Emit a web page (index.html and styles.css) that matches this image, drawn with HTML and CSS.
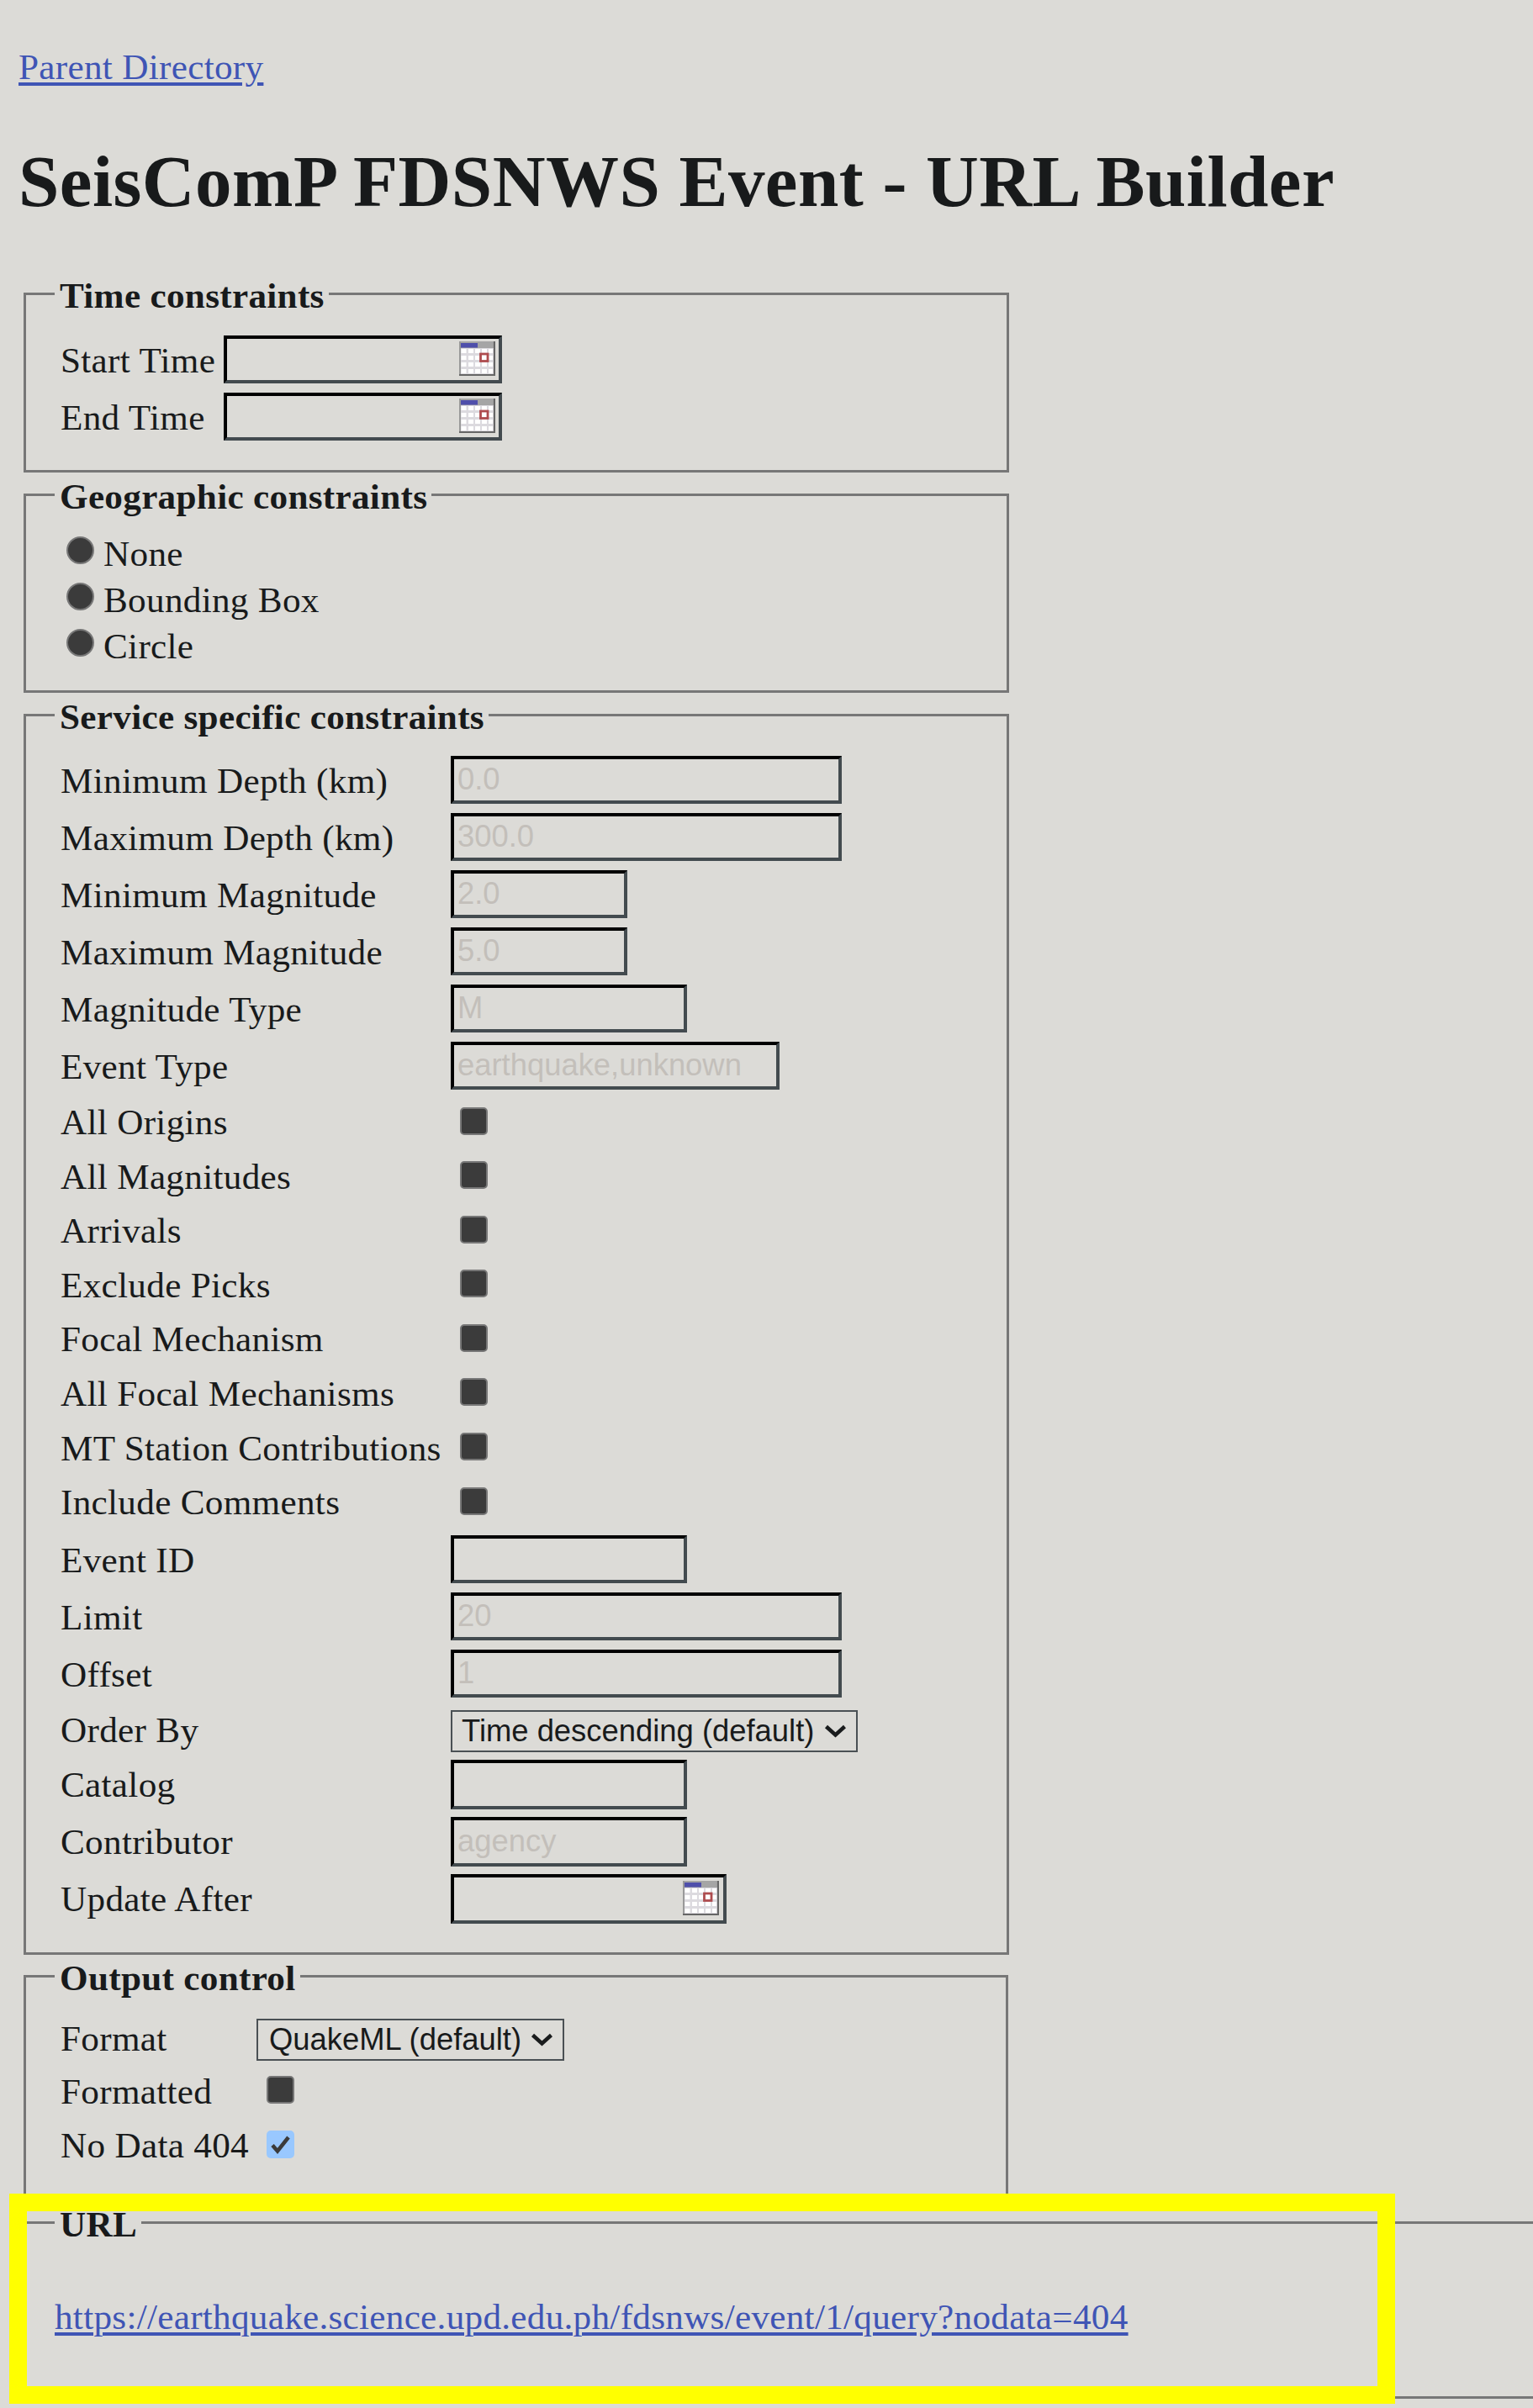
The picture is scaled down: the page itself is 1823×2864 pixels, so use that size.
FILE: index.html
```html
<!DOCTYPE html>
<html lang="en">
<head>
<meta charset="utf-8">
<title>SeisComP FDSNWS Event - URL Builder</title>
<link rel="stylesheet" href="styles.css">
</head>
<body>
<svg class="defs" width="0" height="0" aria-hidden="true">
  <symbol id="calendar" viewBox="0 0 43 41">
    <rect width="43" height="41" fill="#dcdadf"/>
    <rect width="43" height="8" fill="#a5a5a5"/>
    <rect x="2" y="2" width="20" height="5.5" fill="#4f4fab"/>
    <g fill="#fff">
      <path d="M2.5 9h6v5h-6zM11 9h6v5h-6zM19 9h6v5h-6zM27 9h6v5h-6zM35 9h5v5h-5z"/>
      <path d="M2.5 17h6v5h-6zM11 17h6v5h-6zM19 17h6v5h-6zM27 17h6v5h-6zM35 17h5v5h-5z"/>
      <path d="M2.5 25h6v5h-6zM11 25h6v5h-6zM19 25h6v5h-6zM27 25h6v5h-6zM35 25h5v5h-5z"/>
      <path d="M2.5 33h6v5h-6zM11 33h6v5h-6zM19 33h6v5h-6zM27 33h6v5h-6zM35 33h5v5h-5z"/>
    </g>
    <path d="M1 0v41" stroke="#999" stroke-width="2"/>
    <path d="M42 0v41M0 40h43" stroke="#666" stroke-width="2.2" fill="none"/>
    <rect x="25.5" y="15" width="8.5" height="8.5" fill="#fff" stroke="#ae4c4f" stroke-width="2.8"/>
  </symbol>
  <symbol id="chevron" viewBox="0 0 26 18">
    <path d="M2.5 3.5L13.5 13.5 24.5 3.5" fill="none" stroke="#1a1c1d" stroke-width="4.6"/>
  </symbol>
</svg>

<p class="parent"><a href="#">Parent Directory</a></p>
<h1>SeisComP FDSNWS Event - URL Builder</h1>

<fieldset class="time">
  <legend>Time constraints</legend>
  <div class="row"><label>Start Time</label><span class="date"><input class="w-date"><svg><use href="#calendar"/></svg></span></div>
  <div class="row"><label>End Time</label><span class="date"><input class="w-date"><svg><use href="#calendar"/></svg></span></div>
</fieldset>

<fieldset class="geo">
  <legend>Geographic constraints</legend>
  <div class="row"><input type="radio" name="geo"><label>None</label></div>
  <div class="row"><input type="radio" name="geo"><label>Bounding Box</label></div>
  <div class="row"><input type="radio" name="geo"><label>Circle</label></div>
</fieldset>

<fieldset class="service">
  <legend>Service specific constraints</legend>
  <div class="row"><label>Minimum Depth (km)</label><input class="w-l" placeholder="0.0"></div>
  <div class="row"><label>Maximum Depth (km)</label><input class="w-l" placeholder="300.0"></div>
  <div class="row"><label>Minimum Magnitude</label><input class="w-s" placeholder="2.0"></div>
  <div class="row"><label>Maximum Magnitude</label><input class="w-s" placeholder="5.0"></div>
  <div class="row"><label>Magnitude Type</label><input class="w-m" placeholder="M"></div>
  <div class="row"><label>Event Type</label><input class="w-e" placeholder="earthquake,unknown"></div>
  <div class="row check"><label>All Origins</label><input type="checkbox"></div>
  <div class="row check"><label>All Magnitudes</label><input type="checkbox"></div>
  <div class="row check"><label>Arrivals</label><input type="checkbox"></div>
  <div class="row check"><label>Exclude Picks</label><input type="checkbox"></div>
  <div class="row check"><label>Focal Mechanism</label><input type="checkbox"></div>
  <div class="row check"><label>All Focal Mechanisms</label><input type="checkbox"></div>
  <div class="row check"><label>MT Station Contributions</label><input type="checkbox"></div>
  <div class="row check last"><label>Include Comments</label><input type="checkbox"></div>
  <div class="row"><label>Event ID</label><input class="w-m"></div>
  <div class="row"><label>Limit</label><input class="w-l" placeholder="20"></div>
  <div class="row"><label>Offset</label><input class="w-l" placeholder="1"></div>
  <div class="row choice"><label>Order By</label><span class="select w-order"><span>Time descending (default)</span><svg><use href="#chevron"/></svg></span></div>
  <div class="row tall"><label>Catalog</label><input class="w-m"></div>
  <div class="row tall"><label>Contributor</label><input class="w-m" placeholder="agency"></div>
  <div class="row tall"><label>Update After</label><span class="date"><input class="w-update"><svg><use href="#calendar"/></svg></span></div>
</fieldset>

<fieldset class="output">
  <legend>Output control</legend>
  <div class="row choice"><label>Format</label><span class="select w-format"><span>QuakeML (default)</span><svg><use href="#chevron"/></svg></span></div>
  <div class="row check"><label>Formatted</label><input type="checkbox"></div>
  <div class="row check"><label>No Data 404</label><span class="checked"><svg viewBox="0 0 33 33"><path d="M7 17.5l6 7L26 8" fill="none" stroke="#3b3b3b" stroke-width="4.5"/></svg></span></div>
</fieldset>

<fieldset class="url">
  <legend>URL</legend>
  <a href="#">https://earthquake.science.upd.edu.ph/fdsnws/event/1/query?nodata=404</a>
</fieldset>
<div class="highlight"></div>
</body>
</html>
```

FILE: styles.css
```css
* { box-sizing: border-box; }
html { background: #dcdbd7; }
body {
  position: relative;
  width: 1823px;
  height: 2864px;
  margin: 0;
  padding: 55px 0 0 22px;
  overflow: hidden;
  background: #dcdbd7;
  color: #181a1b;
  font: 43.2px/50px "Liberation Serif", "Times New Roman", serif;
  letter-spacing: 0.3px;
}
.defs { position: absolute; }
a {
  color: #3f55b5;
  text-decoration-thickness: 4px;
  text-underline-offset: 4px;
}
.parent { margin: 0; }
h1 {
  margin: 61px 0 60.5px;
  font-size: 87px;
  line-height: 100px;
  letter-spacing: 0.45px;
}
fieldset {
  width: 1172px;
  margin: 0 0 3.5px 6px;
  padding: 0 0 0 41px;
  border: 3px solid #777;
}
legend {
  margin-left: -7px;
  padding: 5px 5px 0 6px;
  line-height: 40px;
  font-weight: bold;
}
.time { height: 235.5px; padding-top: 27px; }
.geo { height: 258.5px; padding-top: 20px; }
.service { height: 1497px; padding-top: 26.5px; }
.output { height: 289px; padding-top: 24px; width: 1171px; }
.url { height: 232.5px; width: 1850px; padding: 65px 0 0 34px; }
.url legend { margin-left: 0; }
.url a { letter-spacing: 0.28px; }

.row {
  display: flex;
  align-items: flex-start;
  height: 68px;
}
.row label { line-height: 60px; white-space: nowrap; }
.time label { width: 194px; }
.service label { width: 464px; }
.output label { width: 234px; }
.row.check { height: 64.6px; }
.row.check.last { height: 66.8px; }
.row.check label { line-height: 56px; }
.row.choice { height: 63px; }
.output .row.choice { height: 62.5px; }
.row.choice label { line-height: 55px; }
.geo .row { height: 55px; }
.geo .row label { line-height: 55px; margin-left: 11px; }

input, .select {
  margin: 0;
  font: 36.4px/44px "Liberation Sans", Arial, sans-serif;
  letter-spacing: 0;
  color: #181a1b;
  background: transparent;
}
input {
  height: 57px;
  padding: 0 6px 1px 4px;
  border: 4px solid;
  border-color: #000 #434b4f #434b4f #000;
  border-radius: 0;
}
input::placeholder { color: #c3bfba; opacity: 1; }
.tall input { height: 59px; }
.w-date { width: 331px; }
.w-update { width: 328px; }
.w-s { width: 210px; }
.w-m { width: 281px; }
.w-e { width: 391px; }
.w-l { width: 465px; }

.date { display: grid; align-items: center; justify-items: end; }
.date input, .date svg { grid-area: 1 / 1; }
.date svg { width: 43px; height: 41px; margin: 0 8px 1px 0; }
.tall .date svg { margin-right: 9px; }

.select {
  display: flex;
  align-items: center;
  justify-content: space-between;
  height: 50px;
  margin-top: 4px;
  padding: 0 12px 0 11px;
  border: 2px solid #4a5054;
  white-space: nowrap;
}
.select svg { width: 26px; height: 18px; }
.w-order { width: 484px; }
.w-format { width: 366px; margin-left: -1px; padding-left: 13px; }

input[type="radio"], input[type="checkbox"], .checked {
  appearance: none;
  width: 33px;
  height: 33px;
  padding: 0;
  border: 2px solid #777;
  background: #3b3b3b;
}
input[type="radio"] { margin: 7px 0 0 7px; border-radius: 50%; }
input[type="checkbox"], .checked { margin: 9.5px 0 0 11px; border-radius: 5px; }
.checked { border: 0; background: #99c8ff; }
.checked svg { display: block; }

.highlight {
  position: absolute;
  left: 11px;
  top: 2609px;
  width: 1648px;
  height: 249.5px;
  border: 21px solid #ff0;
}
```
